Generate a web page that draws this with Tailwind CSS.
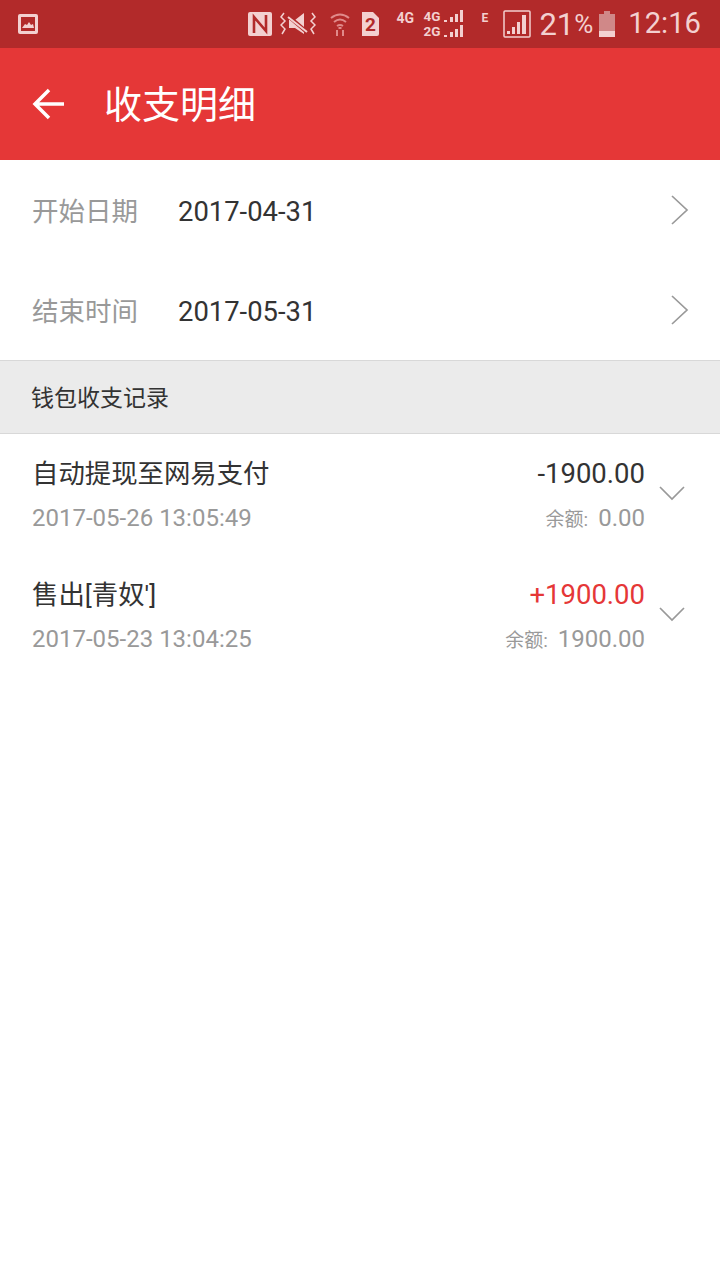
<!DOCTYPE html>
<html lang="zh-CN">
<head>
  <meta charset="UTF-8" />
  <meta name="viewport" content="width=device-width, initial-scale=1" />
  <title>收支明细</title>
  <script src="https://cdn.jsdelivr.net/npm/@tailwindcss/browser@4"></script>
</head>
<body class="bg-white min-h-screen font-['Roboto','Noto_Sans_CJK_SC',sans-serif] text-[#333]">
  <!-- status bar -->
  <div class="h-12 bg-[#b22a2a] flex items-center text-[#f3d0d0] pl-[17px] pr-[19px]">
    <svg class="w-[22px] h-[22px]" viewBox="0 0 22 22"><rect x="1" y="1" width="20" height="20" rx="2" fill="#f3d0d0"/><rect x="4" y="4" width="14" height="14" fill="#b22a2a"/><path d="M5 15l3-4 2 1 2-3 2 3 2-1 1 4z" fill="#f3d0d0"/></svg>
    <div class="ml-auto flex items-center">
      <svg class="w-6 h-6" viewBox="0 0 24 24"><rect width="24" height="24" rx="2" fill="#f3d0d0"/><path d="M6 21V5l12 14V3" fill="none" stroke="#b22a2a" stroke-width="2.6"/></svg>
      <svg class="w-9 h-6 ml-2" viewBox="0 0 36 24" fill="none" stroke="#f3d0d0" stroke-width="1.5"><path d="M4 1L1 5l4 4-4 4 4 4-3 5M32 1l3 4-4 4 4 4-4 4 3 5"/><path d="M9 8h6l9-7v21l-9-6H9z" fill="#f3d0d0" stroke="none"/><path d="M7 3l21 18" stroke="#b22a2a" stroke-width="4"/><path d="M8 5l19 15" stroke-width="2"/></svg>
      <svg class="w-5 h-6 ml-[14px]" viewBox="0 0 20 24" fill="none" stroke="#e08a8a" stroke-width="2"><path d="M1 6q9-7 18 0M4 10q6-5 12 0M7 14q3-2 6 0"/><path d="M10 15v2" stroke-width="3"/><path d="M7 18v6M13 18v6" stroke-width="2"/></svg>
      <div class="relative ml-[10px] w-5 h-6 flex items-center justify-center">
        <svg class="absolute inset-0 w-5 h-6" viewBox="0 0 20 24"><path d="M2 0h11l6 6v16a2 2 0 0 1-2 2H2z" fill="#f3d0d0"/></svg>
        <span class="relative text-[19px] font-bold text-[#b22a2a] leading-none">2</span>
      </div>
      <span class="ml-4 w-6 text-[14px] font-bold leading-none -mt-[12px]">4G</span>
      <div class="ml-[3px] flex flex-col text-[13.5px] font-bold leading-[15px] w-[44px]">
        <div class="flex items-end"><span>4G</span><svg class="ml-1 w-5 h-3 mb-0.5" viewBox="0 0 20 12" fill="#f3d0d0"><path d="M0 10h3v2H0zM6 7h3v5H6zM11 4h3v8h-3zM16 0h3v12h-3z"/></svg></div>
        <div class="flex items-end"><span>2G</span><svg class="ml-1 w-5 h-3 mb-0.5" viewBox="0 0 20 12" fill="#f3d0d0"><path d="M0 10h3v2H0zM6 7h3v5H6zM11 4h3v8h-3zM16 0h3v12h-3z"/></svg></div>
      </div>
      <span class="ml-[14px] w-[14px] text-[12px] font-bold leading-none -mt-[12px]">E</span>
      <svg class="w-7 h-7 ml-2" viewBox="0 0 28 28"><rect x="1" y="1" width="26" height="26" rx="1" fill="none" stroke="#f3d0d0" stroke-width="1.5"/><path d="M4 24h3v-3H4zM9 24h3v-7H9zM14 24h3V12h-3zM19 24h4V5h-4z" fill="#f3d0d0"/></svg>
      <span class="ml-2 text-[31px] leading-none">21</span>
      <span class="text-[26px] leading-none">%</span>
      <svg class="w-4 h-[26px] ml-[6px]" viewBox="0 0 16 26"><path d="M5 0h6v3h5v23H0V3h5z" fill="#d08888"/><rect y="20" width="16" height="6" fill="#f3d0d0"/></svg>
      <span class="ml-[13px] text-[29.2px] leading-none">12:16</span>
    </div>
  </div>

  <!-- title bar -->
  <header class="h-28 bg-[#e53737] flex items-center pl-8 text-white">
    <svg class="w-8 h-8" viewBox="0 0 32 32" fill="none" stroke="#fff" stroke-width="3.5"><path d="M33 16H3M17 2L3 16l14 14"/></svg>
    <h1 class="ml-10 mt-[2px] text-[38px] leading-none">收支明细</h1>
  </header>

  <!-- date filters -->
  <div class="h-[100px] flex items-center pl-8 pr-[31px] pt-[3px]">
    <span class="w-[146px] text-[26.5px] text-[#999]">开始日期</span>
    <span class="mt-[2px] text-[27.4px]">2017-04-31</span>
    <svg class="ml-auto w-[19px] h-[30px] -mt-[3px]" viewBox="0 0 19 30" fill="none" stroke="#999" stroke-width="1.7"><path d="M2 1l15 14L2 29"/></svg>
  </div>
  <div class="h-[100px] flex items-center pl-8 pr-[31px] pt-[3px]">
    <span class="w-[146px] text-[26.5px] text-[#999]">结束时间</span>
    <span class="mt-[2px] text-[27.4px]">2017-05-31</span>
    <svg class="ml-auto w-[19px] h-[30px] -mt-[3px]" viewBox="0 0 19 30" fill="none" stroke="#999" stroke-width="1.7"><path d="M2 1l15 14L2 29"/></svg>
  </div>

  <!-- section -->
  <div class="h-[74px] bg-[#ebebeb] border-y border-[#d8d8d8] flex items-center pl-[31px] pt-[5px] text-[23px]">钱包收支记录</div>

  <!-- records -->
  <div class="h-[121px] flex items-start pl-8 pr-[35px] pt-5">
    <div class="flex-1">
      <div class="text-[26.4px] leading-10">自动提现至网易支付</div>
      <div class="text-[24px] leading-10 mt-1 text-[#999]">2017-05-26 13:05:49</div>
    </div>
    <div class="text-right">
      <div class="text-[27.5px] leading-10">-1900.00</div>
      <div class="leading-10 mt-1 text-[#999] text-[24px]"><span class="text-[19px] mr-[10px]">余额:</span>0.00</div>
    </div>
    <svg class="ml-[14px] mt-[32px] w-[26px] h-[15px]" viewBox="0 0 26 15" fill="none" stroke="#999" stroke-width="1.7"><path d="M1 1l12 12L25 1"/></svg>
  </div>
  <div class="h-[121px] flex items-start pl-8 pr-[35px] pt-5">
    <div class="flex-1">
      <div class="text-[26.4px] leading-10">售出[青奴']</div>
      <div class="text-[24px] leading-10 mt-1 text-[#999]">2017-05-23 13:04:25</div>
    </div>
    <div class="text-right">
      <div class="text-[27.5px] leading-10 text-[#e53737]">+1900.00</div>
      <div class="leading-10 mt-1 text-[#999] text-[24px]"><span class="text-[19px] mr-[10px]">余额:</span>1900.00</div>
    </div>
    <svg class="ml-[14px] mt-[32px] w-[26px] h-[15px]" viewBox="0 0 26 15" fill="none" stroke="#999" stroke-width="1.7"><path d="M1 1l12 12L25 1"/></svg>
  </div>
</body>
</html>
